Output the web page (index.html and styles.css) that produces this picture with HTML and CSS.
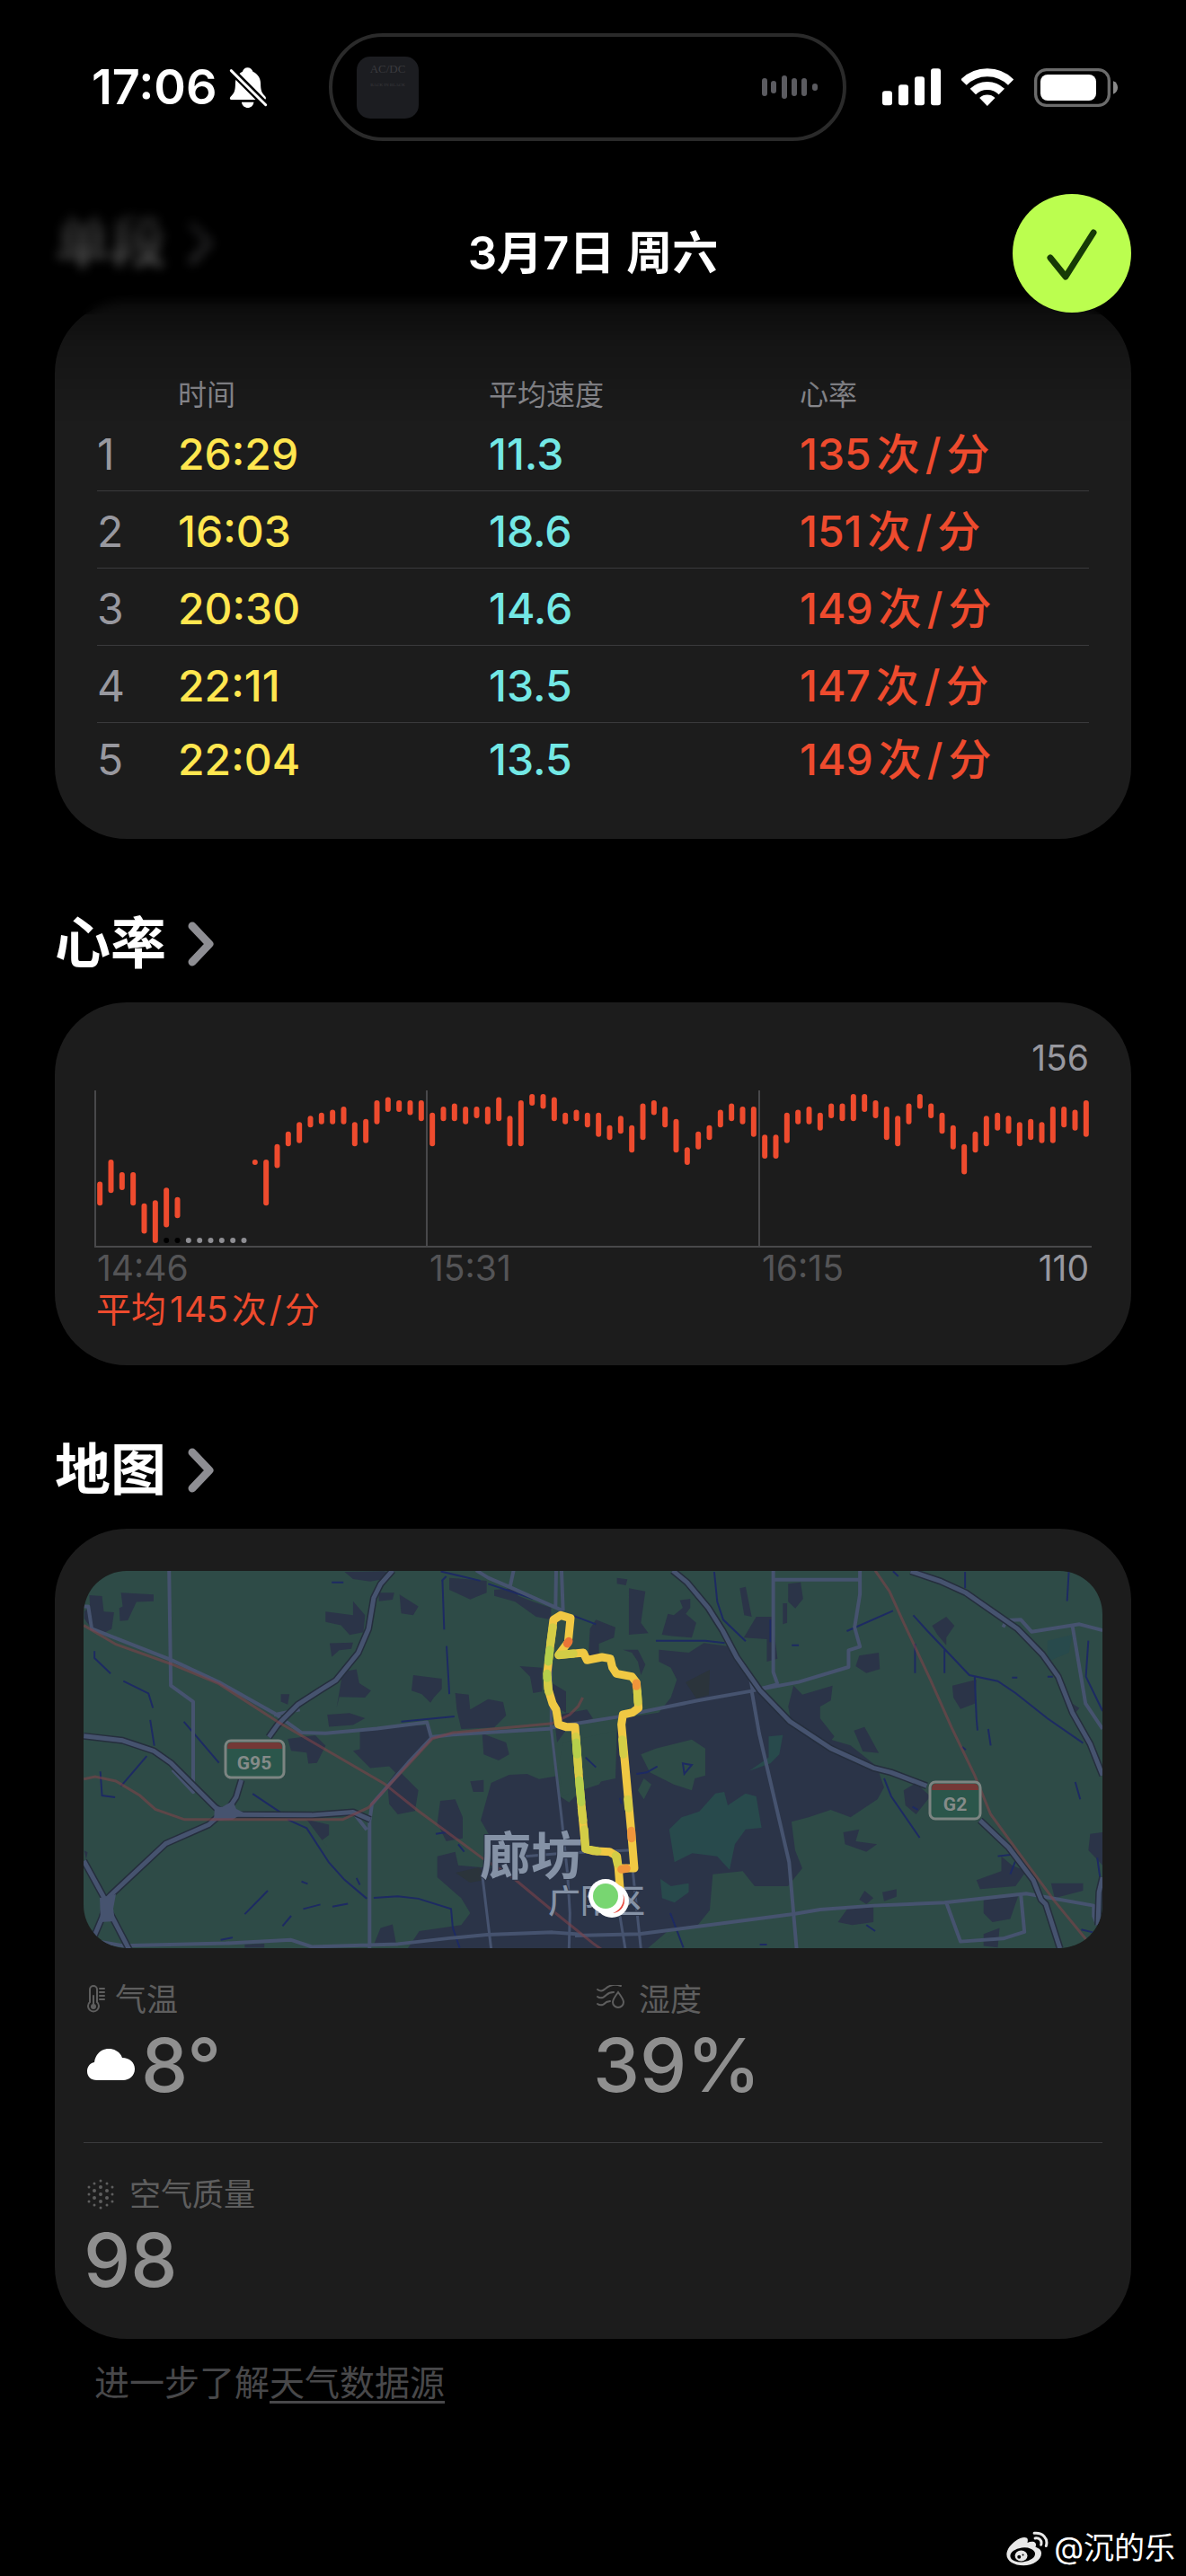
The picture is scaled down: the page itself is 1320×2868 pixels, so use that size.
FILE: index.html
```html
<!DOCTYPE html>
<html lang="zh-CN">
<head>
<meta charset="utf-8">
<meta name="viewport" content="width=device-width">
<title>3月7日 周六</title>
<link rel="stylesheet" href="styles.css">
</head>
<body>
<header class="topbar">
  <div class="status">
    <div class="status-left">
      <span class="clock">17:06</span>
      <svg class="bell" viewBox="580 74 130 140" aria-hidden="true">
        <path fill="#fff" d="M642 77c-8 0-15 6-17 13-15 7-24 22-24 40 0 25-4 33-14 43-7 7-5 12 2 12H697c8 0 9-7 3-13-10-10-14-18-14-42 0-18-10-33-26-40-2-7-10-13-18-13ZM622 193h41c-2 12-10 19-20 19s-19-7-21-19Z"/>
        <path stroke="#000" stroke-width="24" d="M580 79 710 209"/>
        <path stroke="#fff" stroke-width="9" stroke-linecap="round" d="M587 87 703 202"/>
      </svg>
    </div>
    <div class="island">
      <div class="album"><span class="album-band">AC/DC</span><span class="album-name">BACK IN BLACK</span></div>
      <svg class="wave" viewBox="0 0 62 28" aria-hidden="true">
        <path d="M3 7v14M13 10v8M25 4v20M36 7v14M47 7v14M59 13v2"/>
      </svg>
    </div>
    <div class="status-right">
      <svg width="65" height="42" viewBox="6 77 195 126" fill="#fff" aria-hidden="true">
        <rect x="6" y="153" width="33" height="48" rx="9"/><rect x="60" y="132" width="33" height="69" rx="9"/>
        <rect x="114" y="105" width="33" height="96" rx="9"/><rect x="168" y="78" width="33" height="123" rx="9"/>
      </svg>
      <svg width="58" height="42" viewBox="269 75 173 126" fill="none" stroke="#fff" aria-hidden="true">
        <path stroke-width="27" d="M276 122a112 112 0 0 1 158 0M307 153a68 68 0 0 1 96 0"/>
        <path fill="#fff" stroke="none" d="M355 201 329 174a38 38 0 0 1 52 0Z"/>
      </svg>
      <svg width="93" height="43" viewBox="510 75 279 129" aria-hidden="true">
        <rect x="515" y="80" width="245" height="119" rx="36" fill="none" stroke="#6b6b6b" stroke-width="10"/>
        <rect x="531" y="96" width="186" height="87" rx="24" fill="#fff"/>
        <path fill="#8a8a8a" d="M774 118c20 6 20 37 0 43Z"/>
      </svg>
    </div>
  </div>
  <div class="nav">
    <h1>3月7日 周六</h1>
    <button class="done" type="button" aria-label="完成">
      <svg viewBox="0 0 132 132" aria-hidden="true"><path d="M42 71 59 92 90 43"/></svg>
    </button>
  </div>
</header>

<main>
  <section>
    <h2><a href="#splits">单段<svg class="chevron" viewBox="0 0 30 50" aria-hidden="true"><path d="M5 5 24 25 5 45"/></svg></a></h2>
    <div class="card splits" id="splits">
      <table>
        <thead>
          <tr><th aria-label="序号"></th><th>时间</th><th>平均速度</th><th>心率</th></tr>
        </thead>
        <tbody>
          <tr><td>1</td><td>26:29</td><td>11.3</td><td>135<span class="unit">次<i>/</i>分</span></td></tr>
          <tr><td>2</td><td>16:03</td><td>18.6</td><td>151<span class="unit">次<i>/</i>分</span></td></tr>
          <tr><td>3</td><td>20:30</td><td>14.6</td><td>149<span class="unit">次<i>/</i>分</span></td></tr>
          <tr><td>4</td><td>22:11</td><td>13.5</td><td>147<span class="unit">次<i>/</i>分</span></td></tr>
          <tr><td>5</td><td>22:04</td><td>13.5</td><td>149<span class="unit">次<i>/</i>分</span></td></tr>
        </tbody>
      </table>
    </div>
  </section>

  <section>
    <h2><a href="#heart">心率<svg class="chevron" viewBox="0 0 30 50" aria-hidden="true"><path d="M5 5 24 25 5 45"/></svg></a></h2>
    <div class="card heart" id="heart">
      <div class="chart-max">156</div>
      <svg class="chart" viewBox="0 0 1110 175" role="img" aria-label="心率图表">
        <path class="axis" d="M1 0V174M370 0V174M740 0V174M0 174H1110"/>
        <g id="bars"></g>
      </svg>
      <div class="chart-times"><span>14:46</span><span>15:31</span><span>16:15<b>110</b></span></div>
      <div class="average">平均<span class="num">145</span>次<i>/</i>分</div>
    </div>
  </section>

  <section>
    <h2><a href="#map">地图<svg class="chevron" viewBox="0 0 30 50" aria-hidden="true"><path d="M5 5 24 25 5 45"/></svg></a></h2>
    <div class="card place" id="map">
      <svg class="map" viewBox="0 0 1134 420" role="img" aria-label="骑行路线地图">
        <defs>
          <g id="motorways">
            <path transform="translate(-33 -169) scale(.3827)" d="M985 440 950 480 930 520 915 610 885 680 820 760 780 785 710 830 650 890 625 925M545 1050 530 1100 510 1130 490 1140M87 922 200 935 290 965 340 1000 470 1130 500 1150 750 1152 870 1143 920 1165M490 1145 450 1180 325 1235 165 1385 150 1400 87 1285M155 1400 140 1450 115 1510M160 1430 220 1545"/>
            <path transform="translate(547 -49) scale(.3954 .3333)" d="M275 146 315 185 375 270 415 345 455 435 520 545 605 650 720 740 840 805 890 820 990 865M1140 980 1220 1070 1290 1180 1312 1245 1325 1260 1365 1408M945 148 1030 182 1100 220 1245 340 1315 425 1360 500 1400 620 1450 725 1485 830M1485 1170 1475 1220 1472 1330"/>
          </g>
        </defs>
        <rect width="1134" height="420" fill="#2e4b47"/>
        <g fill="#2b3448">
          <path transform="translate(-33 -169) scale(.3827)" d="M88 560 105 545 103 512 140 515 145 560 175 562 168 610 150 620 110 610 88 580ZM195 505 290 510 290 530 240 532 215 585 192 587 190 550 200 545ZM790 560 870 570 870 530 905 570 900 620 860 628 835 600 790 590ZM802 652 870 650 865 668 830 672 808 692ZM845 444 960 442 985 450 960 465 920 472 870 465ZM945 505 990 505 985 525 945 530ZM1005 510 1060 545 1045 570 1010 565ZM840 735 880 728 888 768 922 790 905 810 830 808 822 840ZM1045 745 1128 755 1128 785 1105 810 1095 825 1070 800 1040 790ZM660 800 685 800 680 830 660 822ZM680 930 760 920 790 950 765 1000 740 1002 735 970 690 965ZM795 860 860 855 905 870 870 890 800 895ZM890 900 1085 890 1095 930 1050 980 1000 1035 975 1010 920 1015 870 965 890 960ZM1000 1020 1060 1080 1050 1140 1000 1150 975 1120 970 1060ZM735 1165 800 1180 800 1210 780 1225 795 1245ZM1070 1490 1155 1480 1160 1538 1060 1538ZM950 1480 985 1470 995 1525 930 1530ZM88 1255 98 1260 94 1280ZM555 1528 612 1526 612 1538 555 1538Z"/>
          <path transform="translate(307 -9) scale(.3333)" d="M405 860 440 735 500 708 560 705 600 722 660 712 670 780 700 800 740 760 800 740 830 700 860 560 870 520 1000 500 1040 450 1060 390 1040 350 1000 330 1000 290 1100 300 1150 268 1240 280 1300 370 1380 470 1440 530 1538 580 1640 610 1728 680 1752 750 1730 790 1640 850 1574 825 1500 850 1443 865 1455 960 1479 1020 1431 1080 1320 1080 1280 1030 1180 1040 1170 1160 1130 1210 1030 1230 960 1290 160 1290 200 1230 340 1210 370 1170 340 1120 260 1050 260 980 320 965 330 1010 440 1020 440 920ZM300 50 425 60 425 100 370 122 300 90ZM450 90 520 85 530 110 580 130 640 150 640 190 590 180 520 130 450 110ZM535 345 610 350 610 430 580 435 570 380ZM410 570 490 600 500 640 465 660 415 640ZM320 435 365 440 370 490 430 455 480 465 490 510 450 550 340 555 325 490ZM640 400 690 430 690 500 650 480ZM900 85 955 95 940 200 965 235 900 240ZM860 50 895 55 890 75 860 70ZM790 190 855 215 850 250 800 270 800 310 765 310 770 220ZM1030 170 1050 175 1080 150 1070 125 1105 120 1105 150 1090 170 1125 200 1110 250 1050 245 1010 240ZM880 290 930 290 955 340 940 375 930 330 910 300ZM370 730 415 725 415 765 380 765ZM270 795 320 790 345 850 345 920 290 930 260 870ZM650 510 760 490 780 520 700 545 660 600ZM1270 85 1290 80 1310 180 1285 175Z"/>
          <path transform="translate(547 -49) scale(.3954 .3333)" d="M600 190 635 185 642 240 620 272 600 250ZM585 255 597 255 597 320 585 325ZM510 300 555 300 570 440 540 450 540 375 475 370 500 320ZM1005 330 1045 300 1068 330 1045 370 1045 395 1020 360ZM800 430 855 420 858 475 820 488 790 465ZM615 530 640 560 725 530 720 580 690 600 690 640 730 700 700 745 610 660 600 600ZM1062 530 1130 510 1125 590 1085 608 1065 570ZM785 680 815 668 855 755 810 750ZM925 880 960 855 1000 900 960 960 930 930ZM1450 1025 1485 1020 1485 1130 1445 1080ZM1130 1180 1200 1150 1200 1100 1230 1130 1270 1150 1240 1200 1140 1210ZM1150 1240 1250 1225 1225 1310 1175 1320 1150 1290ZM1340 1190 1430 1190 1430 1215 1350 1240ZM770 1270 840 1270 840 1320 780 1330 740 1320ZM755 1020 800 1010 790 1050 850 1060 820 1085 760 1060ZM865 1220 905 1210 905 1235 870 1250ZM815 1215 840 1240 820 1260 800 1245ZM1150 1360 1195 1340 1190 1405 1150 1400ZM1400 590 1420 605 1405 625Z"/>
        </g>
        <g fill="#2e4b47" transform="translate(307 -9) scale(.3333)">
          <path d="M990 620 1110 590 1155 620 1155 710 1120 720 1110 760 1050 740 970 700 940 640ZM950 720 975 740 950 790 930 760ZM680 600 860 560 855 720 760 740 680 780 665 680ZM1060 1230 1080 1287 980 1287Z"/>
        </g>
        <g fill="#284a4c" transform="translate(547 -49) scale(.3954 .3333)">
          <path d="M395 890 420 885 430 930 480 890 510 900 525 1005 480 1010 450 1060 435 1145 400 1100 330 1090 280 1120 265 1010 300 970 350 950ZM545 700 585 695 575 760 550 790 490 815 545 770ZM240 1175 270 1200 320 1190 320 1220 280 1255 245 1240ZM1330 380 1400 360 1390 420 1330 450Z"/>
        </g>
        <path fill="#2b343b" d="M670 124 697 110 696 138 682 142ZM414 336 440 330 452 343 430 347Z"/>
        <g class="water">
          <path transform="translate(-33 -169) scale(.3827)" d="M118 675V695L165 740M202 762 275 798 288 840M280 875 292 950M270 980 195 1068M135 1025 140 1095 178 1100M378 880 480 1000M578 1090 660 1145M680 1165 735 1190 800 1290 845 1340 910 1395M930 1393 1000 1388 1060 1395 1155 1425 1160 1480 1180 1538M555 1440 622 1372M665 1475 690 1445M725 1425 775 1412M810 1418 855 1410M485 1515 520 1508M1010 880 1165 865M1130 470 1135 612M1142 660 1150 800M808 475H842M1125 443 1240 470M720 1345 738 1352M880 1335 890 1355"/>
          <path transform="translate(307 -9) scale(.3333)" d="M275 60 290 45M430 70 580 120M710 175 790 205M755 650 790 683M925 705 960 700 995 680M1080 670 1110 675 1085 705ZM990 260H1155L1220 268M1185 30 1195 130 1215 190 1290 262M255 905 290 900M330 940 350 965M870 785 875 805"/>
          <path transform="translate(547 -49) scale(.3954 .3333)" d="M952 295 990 345 1110 495 1190 515 1240 555 1330 640 1430 722M1125 500 1130 640 1133 680M1163 675 1170 730M870 840 890 900 970 1038M765 348 895 280M957 390V488M1040 405V488M1445 380 1438 500 1485 615M1390 150 1385 248M1408 852 1422 910M1098 150V205M550 310V385M1190 1100 1225 1095M1240 1115 1225 1160M1470 1105 1480 1190M1425 1345 1460 1355M268 1290 305 1405M820 1330 845 1350M610 395H630M1230 503H1245M1330 500H1345M1090 735 1100 745M950 935 965 945M520 1395H540M895 148 910 165"/>
        </g>
        <g class="road minor">
          <path transform="translate(-33 -169) scale(.3827)" d="M335 440 340 775 405 822V1085L345 1020M87 545H100L110 610 340 700 480 765 640 855 720 912 790 914 940 900 1085 882 1097 925 1160 918 1450 900M640 860 715 845M1100 925 1030 1000 925 1120 918 1170V1540M870 1143 910 1195M120 1518 200 1532 500 1525 690 1515 750 1535 1000 1527 1150 1510 1260 1500 1450 1493 1535 1499"/>
          <path transform="translate(307 -9) scale(.3333)" d="M390 25 430 50 500 80 680 160M515 25 503 80M657 25 655 150M675 25 680 160M642 550 860 515 1130 460 1310 428 1400 405M1310 428 1335 570 1435 1000 1460 1290"/>
          <path transform="translate(547 -49) scale(.3954 .3333)" d="M558 146V485L570 525M553 176H800M802 146V225L787 335 802 400 770 412V468L630 518 530 540M490 485 500 545M1205 335 1215 312 1255 310 1285 350 1420 325 1485 345M1400 330 1437 590 1485 675M0 1365 180 1360 615 1293 690 1278 840 1265 1040 1255 1270 1225 1460 1265V1300L1470 1330M1045 1255 1085 1385 1205 1375 1265 1353 1255 1230"/>
        </g>
        <g class="road street">
          <path transform="translate(307 -9) scale(.3333)" d="M640 190V550L675 850 695 1040 703 1170 700 1290M410 1040 440 1290M555 980 680 970 900 960M910 1000 940 1290M870 1180 888 1290"/>
        </g>
        <use href="#motorways" class="road casing"/>
        <use href="#motorways" class="road motorway"/>
        <path fill="#46536f" d="m146 262 8 1 12-7 4 9 8 4-12 8-21 1Zm-128 102 18-4-3 16 2 14-16 1Z"/>
        <g class="rail">
          <path transform="translate(-33 -169) scale(.3827)" d="M87 600 180 655 340 712 480 770 650 880 960 1060 1060 1140 1250 1280 1330 1330 1450 1430 1568 1525 1600 1548M87 1047 120 1040 180 1053 250 1095 295 1135 380 1165 840 1165 915 1130 1100 930 1160 912 1450 885 1500 860 1525 835 1538 810"/>
          <path transform="translate(547 -49) scale(.3954 .3333)" d="M845 146 885 215 925 320 1000 510 1060 670 1125 830 1170 960 1250 1090 1350 1250 1440 1380"/>
        </g>
        <g class="shield">
          <rect x="158" y="189" width="65" height="41" rx="6"/>
          <path d="M160 198v-2q0-5 5-5h51q5 0 5 5v2Z"/>
          <text x="190" y="221">G95</text>
          <rect x="942" y="235" width="56" height="41" rx="6"/>
          <path d="M944 244v-2q0-5 5-5h42q5 0 5 5v2Z"/>
          <text x="970" y="267">G2</text>
        </g>
        <g class="place-name">
          <text class="city" x="441" y="338">廊坊</text>
          <text class="district" x="517" y="381">广阳区</text>
        </g>
        <g class="route" transform="translate(307 -9) scale(.3333)">
          <path stroke="#f0c843" d="M872 1110 865 1020 918 1020 908 900 875 540 880 507 912 500 932 485 928 430 925 400 910 380 858 370 845 350 838 320 810 315 760 325 748 300 665 308 697 265 705 185 672 175 648 190 638 270 627 370 630 420 645 470 657 490 665 540 690 548 720 548 735 740 755 955 780 962 835 965 860 980 865 1020"/>
          <path stroke="#d3cd46" d="M646 215 638 270M628 385 632 430M723 580 732 700M742 820 747 860M751 890 755 955 795 963M856 978 862 1005M668 307 715 303M896 790 899 820M928 430 930 465M878 590 882 640"/>
          <path stroke="#b5cf4b" d="M636 290 631 330M627 370V385M724 600 727 640M734 725 741 800"/>
          <path stroke="#f0953b" d="M925 402V412M908 895 909 920M875 1024 892 1021"/>
          <path stroke="#ea7537" d="M699 262 694 270"/>
        </g>
        <circle cx="588" cy="367" r="19" fill="#fff"/><circle cx="588" cy="367" r="14" fill="#e8473c"/>
        <circle cx="583" cy="364" r="18" fill="#fff"/>
        <circle cx="581" cy="362" r="19" fill="#fff"/><circle cx="581" cy="362" r="14" fill="#78d671"/>
      </svg>

      <dl class="weather">
        <div>
          <dt><svg width="20" height="32" viewBox="0 0 20 32" aria-hidden="true"><path d="M3 19V5a4 4 0 0 1 8 0v14a6 6 0 1 1-8 0ZM14 4h5M14 8h5M14 12h5M14 16h5M7 12v12"/><circle cx="7" cy="24" r="3" fill="currentColor" stroke="none"/></svg>气温</dt>
          <dd><svg width="53" height="36" viewBox="0 0 53 36" aria-hidden="true"><path fill="#fff" d="M11 35C4 35 0 31 0 25c0-5 3-9 8-10C9 6 16 0 24 0c7 0 13 4 15 10 8 0 14 5 14 12.500S47 35 40 35Z"/></svg>8°</dd>
        </div>
        <div>
          <dt class="wide"><svg width="31" height="32" viewBox="0 0 31 32" aria-hidden="true"><path d="M1 5c4 3 6 1 9-1 6-5 12-5 17-3M1 13c4 3 7 1 10-2 2-2 5-3 8-3M1 21c4 3 7 1 10-2l4-1M24 8c3 4 6 8 6 11a6 6 0 0 1-12 0c0-3 3-7 6-11Z"/></svg>湿度</dt>
          <dd>39%</dd>
        </div>
        <div>
          <dt class="wide"><svg width="31" height="34" viewBox="0 0 31 34" aria-hidden="true"><path class="dots small" d="M2 9h0M2 17h0M2 25h0M8 5h0M8 29h0M15 2h0M15 32h0M22 5h0M22 29h0M28 9h0M28 17h0M28 25h0"/><path class="dots" d="M8 13h0M8 21h0M15 9h0M15 17h0M15 25h0M22 13h0M22 21h0"/></svg>空气质量</dt>
          <dd>98</dd>
        </div>
      </dl>
    </div>
    <p class="source">进一步了解<a href="#weather-sources">天气数据源</a></p>
  </section>

  <footer class="credit">
    <svg width="47" height="39" viewBox="125 106 142 118" aria-hidden="true">
      <path fill="#e8e8e8" d="M193 129c5 3 5 8 3 16 10-4 22-5 27 1 3 5 2 9 0 14 12 4 20 10 20 21 0 22-28 41-60 41s-57-14-57-37c0-18 14-34 30-46 14-10 30-15 37-10Z"/>
      <ellipse cx="180" cy="186" rx="42" ry="24" transform="rotate(-7 180 186)"/>
      <ellipse cx="175" cy="189" rx="21" ry="18" fill="#e8e8e8"/>
      <circle cx="168" cy="193" r="6"/><circle cx="181" cy="186" r="3"/>
      <path fill="none" stroke="#e8e8e8" stroke-width="9" stroke-linecap="round" d="M219 113c28-3 48 18 40 43M222 130c14-2 24 8 20 22"/>
    </svg>
    <span>@沉的乐</span>
  </footer>
</main>
<script src="script.js"></script>
</body>
</html>
```
FILE: styles.css
```css
* { box-sizing: border-box; margin: 0; padding: 0; }

body {
  background: #000;
  color: #fff;
  font-family: Inter, "Noto Sans CJK SC", sans-serif;
}

a { color: inherit; text-decoration: none; }
i { font-style: normal; }
svg { display: block; flex: none; }

/* Floating top bar */
.topbar { position: fixed; inset: 0 0 auto; z-index: 2; height: 470px; pointer-events: none; }
.topbar::before {
  content: "";
  position: absolute;
  inset: 0;
  z-index: -1;
  background: linear-gradient(#000 200px, rgba(0, 0, 0, .8) 268px, rgba(0, 0, 0, .5) 345px, rgba(0, 0, 0, .25) 385px, transparent 470px);
}
.topbar::after {
  content: "";
  position: absolute;
  inset: 0 0 120px;
  z-index: -2;
  backdrop-filter: blur(6px);
}
.status { display: grid; grid-template-columns: 366fr 576fr 378fr; align-items: center; padding-top: 37px; }
.status-left { display: flex; align-items: center; gap: 13px; padding-left: 102px; }
.clock { font-size: 54px; font-weight: 600; line-height: 64px; }
.bell { width: 43px; height: 47px; }
.island {
  display: flex; align-items: center; justify-content: space-between;
  height: 120px; padding: 0 28px 0 27px;
  border: 4px solid #2a2a2a; border-radius: 60px;
}
.album {
  display: flex; flex-direction: column; align-items: center;
  width: 69px; height: 69px; padding-top: 5px;
  border-radius: 15px; background: #1c1d21; color: #3a3a3e;
  font-family: "Liberation Serif", serif; font-size: 13px; line-height: 18px;
}
.album-name { font-size: 5px; line-height: 18px; }
.wave { width: 62px; height: 28px; fill: none; stroke: #5b5b60; stroke-width: 6; stroke-linecap: round; }
.status-right { display: flex; align-items: center; gap: 23px; padding-left: 40px; }

.nav { display: grid; grid-template-columns: 1fr auto 1fr; align-items: center; padding: 59px 61px 0; }
.nav h1 { grid-column: 2; font-size: 51px; font-weight: 600; line-height: 64px; }
.done {
  justify-self: end; width: 132px; height: 132px;
  border: 0; border-radius: 50%; background: #bbfe4f; pointer-events: auto;
}
.done path { fill: none; stroke: #163a06; stroke-width: 7; stroke-linecap: round; stroke-linejoin: round; }

/* Page */
main { display: flex; flex-direction: column; min-height: 100vh; padding-top: 153px; }
section { padding: 0 61px; }
h2 { padding: 80px 0 28px; font-size: 62px; font-weight: 700; line-height: 74px; }
h2 a { display: inline-flex; align-items: center; gap: 24px; }
.chevron { width: 30px; height: 50px; fill: none; stroke: #8e8e93; stroke-width: 9; stroke-linecap: round; stroke-linejoin: round; }
.card { border-radius: 80px; background: #1c1c1c; }

/* Splits */
.splits { padding: 84px 47px 60px; }
table { width: 100%; border-collapse: collapse; table-layout: fixed; }
th { font-size: 32px; font-weight: 400; line-height: 42px; text-align: left; color: #8e8e93; }
th:first-child { width: 90px; }
th:nth-child(2), th:nth-child(3) { width: 346px; }
td { padding: 17px 0 12px; border-bottom: 1px solid #3a3a3c; font-size: 48px; font-weight: 500; line-height: 56px; white-space: nowrap; }
tr:last-child td { padding: 13px 0 0; border: 0; }
td:nth-child(1) { font-weight: 400; color: #98989f; }
td:nth-child(2) { color: #ffe64f; }
td:nth-child(3) { color: #73e8e5; }
td:nth-child(4) { color: #ee4b2e; }
.unit { margin-left: 6px; }
.unit i { margin: 0 6px; }

/* Heart rate */
.heart { padding: 39px 44px; font-size: 39px; line-height: 46px; color: #98989f; }
.chart-max { padding-right: 3px; text-align: right; }
.chart { width: 100%; margin-top: 13px; }
.axis { fill: none; stroke: #48484a; stroke-width: 2; }
.bar { stroke: #ee4b2e; stroke-width: 6; stroke-linecap: round; }
.gap { fill: #8e8e93; }
.gap.hidden { fill: #000; }
.chart-times { display: grid; grid-template-columns: repeat(3, 1fr); color: #545456; }
.chart-times span { display: flex; justify-content: space-between; padding: 0 3px; }
.chart-times b { font-weight: 400; color: #98989f; }
.average { padding-left: 2px; color: #ee4b2e; }
.average i { margin: 0 3px; }
.num { margin: 0 4px; }

/* Map and weather */
.place { padding: 47px 32px 2px; }
.map { width: 100%; border-radius: 48px; }
.map path { vector-effect: non-scaling-stroke; }
.water { fill: #1d2a63; fill-opacity: 0; stroke: #1d2a63; stroke-width: 2; }
.road { fill: none; stroke: #46536f; stroke-linejoin: round; }
.minor { stroke-width: 4; }
.street { stroke-width: 3; }
.casing { stroke: #252e3d; stroke-width: 8; }
.motorway { stroke-width: 5; }
.rail { fill: none; stroke: #7d434a; stroke-opacity: .6; stroke-width: 3; }
.shield { fill: #2b564b; stroke: #7c8582; stroke-width: 3; }
.shield path { fill: #743836; stroke: none; }
.shield text { fill: #858b89; stroke: none; font: 700 21px Roboto, sans-serif; text-anchor: middle; }
.place-name { fill: #8592a6; stroke: #2b3448; stroke-width: 2; paint-order: stroke; }
.city { font-size: 57px; font-weight: 700; }
.district { font-size: 36px; font-weight: 500; }
.route { fill: none; stroke-width: 9; stroke-linecap: round; stroke-linejoin: round; }

.weather { display: grid; grid-template-columns: 1fr 1fr; }
.weather > div { padding: 36px 0 38px; }
.weather > div:nth-child(-n+2) { border-bottom: 1px solid #3a3a3c; }
dt { display: flex; align-items: center; gap: 11px; padding-left: 4px; font-size: 35px; line-height: 42px; color: #5e5e5e; }
dt.wide { gap: 16px; }
dt path { fill: none; stroke: currentColor; stroke-width: 2; stroke-linecap: round; }
dt .dots { stroke-width: 4; }
dt .small { stroke-width: 3; }
dd { display: flex; align-items: center; gap: 7px; margin-top: 4px; font-size: 83px; font-weight: 500; line-height: 96px; color: #8f8f8f; }
dd svg { margin-left: 4px; }
.source { padding: 22px 44px 0; font-size: 39px; line-height: 54px; color: #48484a; }
.source a { text-decoration: underline; text-decoration-thickness: 3px; text-underline-offset: 6px; text-decoration-skip-ink: none; }

.credit { display: flex; align-items: center; justify-content: flex-end; gap: 6px; margin-top: auto; padding: 0 12px 8px; font-size: 34px; line-height: 46px; }
```
FILE: script.js
```js
// Lowest and highest heart rate in each interval; null where nothing was recorded.
const samples = [
  [122,128],[126,135],[127,131],[122,131],[113,121],[110,122],[115,126],[118,123],null,null,
  null,null,null,null,[135,135],[122,135],[134,140],[141,144],[142,147],[147,149],
  [148,150],[148,151],[148,152],[141,147],[142,148],[148,154],[152,155],[152,154],[151,154],[149,154],
  [141,150],[149,152],[149,153],[148,152],[150,152],[148,152],[149,155],[141,149],[141,154],[154,156],
  [153,156],[149,155],[148,150],[149,151],[147,150],[144,150],[143,146],[145,149],[139,146],[143,153],
  [151,154],[147,152],[139,148],[135,139],[140,144],[143,146],[147,151],[149,153],[148,152],[144,152],
  [137,143],[137,143],[142,150],[148,151],[148,152],[146,150],[150,153],[149,153],[149,156],[152,156],
  [150,154],[143,152],[141,149],[148,153],[153,156],[150,153],[145,150],[140,146],[132,140],[139,144],
  [141,149],[146,150],[145,149],[141,147],[143,148],[142,147],[142,152],[147,152],[146,151],[144,154]
];

const MAX = 156;
const MIN = 110;
const TOP = 7;
const BOTTOM = 167;
const step = 1110 / samples.length;
const group = document.getElementById("bars");

function add(name, attributes) {
  const node = document.createElementNS("http://www.w3.org/2000/svg", name);
  for (const key in attributes) node.setAttribute(key, attributes[key]);
  group.appendChild(node);
}

function y(rate) {
  return TOP + (MAX - rate) * (BOTTOM - TOP) / (MAX - MIN);
}

samples.forEach((sample, i) => {
  const x = (i + 0.5) * step;
  if (i > 5 && i < 14) {
    add("circle", { class: sample ? "gap hidden" : "gap", cx: x, cy: BOTTOM, r: 3 });
  }
  if (sample) {
    add("path", { class: "bar", d: `M${x} ${y(sample[1])}V${y(sample[0]) + 0.01}` });
  }
});
```
